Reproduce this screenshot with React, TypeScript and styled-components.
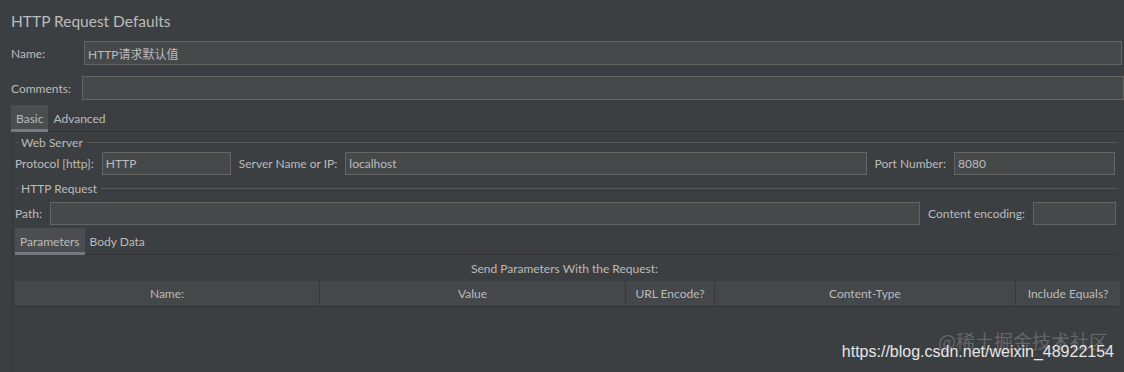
import React from "react";
import styled, { createGlobalStyle } from "styled-components";

const Global = createGlobalStyle`
  html, body { margin: 0; padding: 0; background: #3c3f41; }
  body {
    font-family: Lato, "Noto Sans CJK SC", sans-serif;
    font-size: 12px;
    color: #bbbbbb;
  }
  #root { min-height: 372px; }
`;

const Page = styled.div`
  position: relative;
  width: 1124px;
  height: 372px;
  overflow: hidden;
  background: #3c3f41;
`;

const Title = styled.div`
  height: 41px;
  display: flex;
  align-items: center;
  padding-left: 11px;
  font-size: 15.5px;
  color: #bbbbbb;
`;

const Row = styled.div<{ $top?: number; $left?: number; $right?: number }>`
  display: flex;
  align-items: center;
  margin-top: ${(p) => p.$top ?? 0}px;
  padding-left: ${(p) => p.$left ?? 0}px;
  padding-right: ${(p) => p.$right ?? 0}px;
  gap: 8px;
`;

const Label = styled.span<{ $w?: number }>`
  flex: 0 0 ${(p) => (p.$w ? `${p.$w}px` : "auto")};
  white-space: nowrap;
  color: #bbbbbb;
`;

const Input = styled.div<{ $w?: number; $h?: number }>`
  box-sizing: border-box;
  height: ${(p) => p.$h ?? 24}px;
  ${(p) => (p.$w ? `flex: 0 0 ${p.$w}px;` : "flex: 1 1 auto;")}
  background: #45494a;
  border: 1px solid #646464;
  display: flex;
  align-items: center;
  padding-left: 3px;
  color: #bbbbbb;
  white-space: nowrap;
`;

const TabBar = styled.div<{ $top?: number; $left?: number }>`
  display: flex;
  align-items: stretch;
  height: 26px;
  margin-top: ${(p) => p.$top ?? 0}px;
  margin-left: ${(p) => p.$left ?? 0}px;
  border-bottom: 1px solid #323232;
`;

const Tab = styled.div<{ $active?: boolean }>`
  display: flex;
  align-items: center;
  padding: 0 5px;
  box-sizing: border-box;
  background: ${(p) => (p.$active ? "#4b4e50" : "transparent")};
  border-bottom: 3px solid ${(p) => (p.$active ? "#747a7f" : "transparent")};
  margin-bottom: -1px;
  padding-top: 2px;
  color: #bbbbbb;
`;

const Panel = styled.div`
  margin-left: 12px;
  border-left: 1px solid #333537;
  padding-left: 2px;
  padding-right: 6px;
  height: 240px;
`;

const GroupHeader = styled.div<{ $h: number }>`
  display: flex;
  align-items: center;
  height: ${(p) => p.$h}px;
  padding-left: 1px;
  &::before {
    content: "";
    width: 3px;
    height: 1px;
    background: #555859;
    margin-right: 2px;
  }
  &::after {
    content: "";
    flex: 1;
    height: 1px;
    background: #555859;
    margin-left: 4px;
  }
`;

const Caption = styled.div`
  height: 26px;
  display: flex;
  align-items: center;
  justify-content: center;
  padding-right: 4px;
`;

const Table = styled.div`
  display: grid;
  grid-template-columns: 305px 306px 89px 301px 104px;
  height: 25px;
  border-bottom: 1px solid #313335;
`;

const HeadCell = styled.div<{ $last?: boolean }>`
  display: flex;
  align-items: center;
  justify-content: center;
  background: #45484a;
  border-right: ${(p) => (p.$last ? "none" : "1px solid #36383a")};
  white-space: nowrap;
`;

const Watermark = styled.div`
  position: absolute;
  right: 10px;
  bottom: 11px;
  font-family: "Liberation Sans", Arial, sans-serif;
  font-size: 16px;
  color: #e6e6e6;
  white-space: nowrap;
`;

const WatermarkCn = styled.div`
  position: absolute;
  right: 16px;
  bottom: 18px;
  font-family: "Noto Sans CJK SC", sans-serif;
  font-size: 19px;
  color: rgba(200, 200, 200, 0.3);
  white-space: nowrap;
`;

export default function App() {
  return (
    <>
      <Global />
      <Page>
        <Title>HTTP Request Defaults</Title>
        <Row $left={11} $right={2}>
          <Label $w={65}>Name:</Label>
          <Input>HTTP请求默认值</Input>
        </Row>
        <Row $top={11} $left={11} $right={0}>
          <Label $w={63}>Comments:</Label>
          <Input />
        </Row>
        <TabBar $top={5} $left={11}>
          <Tab $active>Basic</Tab>
          <Tab>Advanced</Tab>
        </TabBar>
        <Panel>
          <GroupHeader $h={20}>Web Server</GroupHeader>
          <Row $right={3}>
            <Label>Protocol [http]:</Label>
            <Input $w={129} $h={23}>HTTP</Input>
            <Label>Server Name or IP:</Label>
            <Input $h={23}>localhost</Input>
            <Label>Port Number:</Label>
            <Input $w={161} $h={23}>8080</Input>
          </Row>
          <GroupHeader $h={27}>HTTP Request</GroupHeader>
          <Row $right={2}>
            <Label>Path:</Label>
            <Input $h={23} />
            <Label>Content encoding:</Label>
            <Input $w={83} $h={23} />
          </Row>
          <TabBar $top={3} $left={0}>
            <Tab $active>Parameters</Tab>
            <Tab>Body Data</Tab>
          </TabBar>
          <Caption>Send Parameters With the Request:</Caption>
          <Table>
            <HeadCell>Name:</HeadCell>
            <HeadCell>Value</HeadCell>
            <HeadCell>URL Encode?</HeadCell>
            <HeadCell>Content-Type</HeadCell>
            <HeadCell $last>Include Equals?</HeadCell>
          </Table>
        </Panel>
        <WatermarkCn>@稀土掘金技术社区</WatermarkCn>
        <Watermark>https://blog.csdn.net/weixin_48922154</Watermark>
      </Page>
    </>
  );
}
